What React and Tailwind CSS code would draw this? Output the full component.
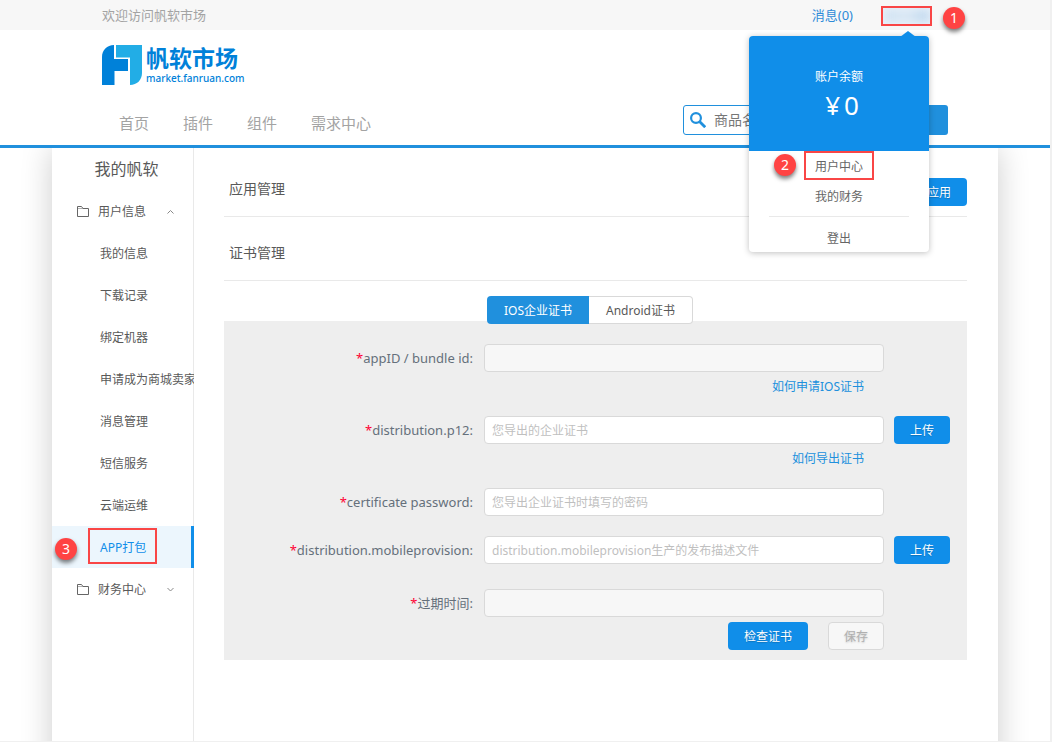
import clsx from 'clsx';

const FONT = 'font-["Noto_Sans","Noto_Sans_CJK_SC",sans-serif]';

const navItems = ['首页', '插件', '组件', '需求中心'];

const userItems = [
  { label: '我的信息' },
  { label: '下载记录' },
  { label: '绑定机器' },
  { label: '申请成为商城卖家' },
  { label: '消息管理' },
  { label: '短信服务' },
  { label: '云端运维' },
  { label: 'APP打包', active: true, step: 3 },
];

const StepBadge = ({ number, className }) => (
  <span
    className={clsx(
      'absolute z-30 flex h-[22px] w-[22px] items-center justify-center rounded-full bg-[#ff4343] text-sm leading-none text-white shadow-[0_3px_4px_rgba(0,0,0,0.5)]',
      className
    )}
  >
    {number}
  </span>
);

const LogoMark = () => (
  <svg className="h-10 w-10" viewBox="0 0 40 40" aria-hidden="true">
    <path d="M0 40V12C0 5 5 0 12 0V14H26V26H12.500V40Z" fill="#0081d9" />
    <path d="M14 0H40V28C40 35 35 40 28 40V12.500H14Z" fill="#22ade6" />
  </svg>
);

const SearchIcon = () => (
  <svg className="h-4 w-4 shrink-0" viewBox="0 0 16 16" fill="none" stroke="#2090dd" aria-hidden="true">
    <circle cx="6" cy="6" r="4.900" strokeWidth="2.200" />
    <path d="M9.500 9.500 15.200 15.200" strokeWidth="2.800" />
  </svg>
);

const FolderIcon = () => (
  <svg className="h-3 w-3 shrink-0" viewBox="0 0 12 12" fill="none" stroke="#666" aria-hidden="true">
    <path d="M.5 10.500V.5H4.500L6 2.500H11.500V10.500Z" />
    <path d="M.5 2.500H6" strokeOpacity="0.5" />
  </svg>
);

const Chevron = ({ open }) => (
  <svg className="h-2 w-2 shrink-0" viewBox="0 0 8 8" fill="none" stroke="#888" aria-hidden="true">
    <path d={open ? 'M1.500 5.500 4.500 2.500 7.500 5.500' : 'M1.500 2 4.500 5 7.500 2'} />
  </svg>
);

const UserMenu = () => (
  <div className="absolute top-[30px] right-[3px] z-20 w-[180px] rounded bg-white text-center text-xs text-[#666] shadow-[0_1px_6px_rgba(0,0,0,0.25)]">
    <span className="absolute -top-[5px] right-[13px] border-x-8 border-b-[6px] border-x-transparent border-b-[#108ee9]" />
    <div className="flex h-[115px] flex-col items-center justify-center rounded-t bg-[#108ee9] pt-0.5 text-white">
      <span className="leading-5">账户余额</span>
      <span className="flex gap-1 pl-1.5 text-[26px] leading-9">
        <span>¥</span>
        <span>0</span>
      </span>
    </div>
    <div className="relative">
      <StepBadge number={2} className="top-[3px] left-[25px]" />
      <a href="#center" className="mx-auto flex h-[29px] w-[70px] items-center justify-center border-2 border-[#f94646] pt-0.5">
        用户中心
      </a>
    </div>
    <a href="#finance" className="flex h-8 items-center justify-center pt-0.5">我的财务</a>
    <div className="mx-5 mt-1 border-t border-[#e9e9e9]" />
    <a href="#logout" className="flex h-[35px] items-center justify-center pt-2">登出</a>
  </div>
);

const TopBar = () => (
  <div className="flex h-[30px] items-center bg-[#f7f7f7] px-[102px] pt-0.5 text-[13px] text-[#a3a3a3]">
    <span>欢迎访问帆软市场</span>
    <a href="#message" className="mr-7 ml-auto text-[#2e8bd8]">消息(0)</a>
    <div className="relative mr-4">
      <button
        type="button"
        aria-label="用户"
        className="block h-5 w-[51px] overflow-hidden border-2 border-[#f94646] bg-[#e9f1f9] p-0.5"
      >
        <span className="block h-3 w-11 bg-linear-to-r from-[#cfe2f3] via-[#d9e7f4] to-[#bcd6ee] blur-xs" />
      </button>
      <StepBadge number={1} className="top-[1px] left-[62px]" />
      <UserMenu />
    </div>
  </div>
);

const Header = () => (
  <header className="relative z-10">
    <TopBar />
    <div className="border-b-[3px] border-[#2090dd] bg-white px-[102px] pt-[15px] pb-[10px]">
      <a href="#home" className="flex w-fit gap-1 text-[#0081d9]">
        <LogoMark />
        <span className="flex flex-col">
          <span className="text-[23px] leading-[26px] font-bold">帆软市场</span>
          <span className="text-[10px] leading-[14px] font-medium">market.fanruan.com</span>
        </span>
      </a>
      <div className="mt-5 flex items-center justify-between">
        <nav className="mt-1.5 flex gap-[34px] pl-[17px] text-[15px] text-[#a3a3a3]">
          {navItems.map((item) => (
            <a key={item} href="#nav">{item}</a>
          ))}
        </nav>
        <form className="flex h-[30px] w-[265px]">
          <label className="flex min-w-0 flex-1 items-center gap-2 rounded-l-[3px] border border-[#2090dd] pl-1.5">
            <SearchIcon />
            <input
              type="text"
              aria-label="搜索商品"
              placeholder="商品名称"
              className="w-full min-w-0 text-sm outline-none placeholder:text-[#777]"
            />
          </label>
          <button type="submit" aria-label="搜索" className="w-[88px] rounded-r-[3px] bg-[#2090dd]" />
        </form>
      </div>
    </div>
  </header>
);

const GroupRow = ({ label, open }) => (
  <button type="button" aria-expanded={open} className="flex h-[42px] w-full items-center pt-0.5 pl-[25px]">
    <FolderIcon />
    <span className="ml-[9px] w-[68px] text-left">{label}</span>
    <Chevron open={open} />
  </button>
);

const Sidebar = () => (
  <aside className="w-[142px] shrink-0 border-r border-[#e9e9e9] text-xs text-[#595959]">
    <div className="flex h-[42px] items-center justify-center pl-2 text-base">我的帆软</div>
    <div className="-mr-px overflow-hidden">
      <GroupRow label="用户信息" open />
      <ul>
        {userItems.map((item) => (
          <li
            key={item.label}
            className={clsx(
              'relative flex h-[42px] pt-0.5 whitespace-nowrap',
              item.active
                ? 'items-start border-r-[3px] border-[#108ee9] bg-[#ecf6fd] text-[#108ee9]'
                : 'items-center'
            )}
          >
            {item.step && <StepBadge number={item.step} className="top-3 left-[3px]" />}
            {item.active ? (
              <a href="#item" className="ml-9 flex h-9 w-[69px] items-center border-2 border-[#f94646] pt-1 pl-[10px]">
                {item.label}
              </a>
            ) : (
              <a href="#item" className="ml-12">{item.label}</a>
            )}
          </li>
        ))}
      </ul>
      <GroupRow label="财务中心" open={false} />
    </div>
  </aside>
);

const SectionTitle = ({ title, children }) => (
  <div className="flex h-16 items-center border-b border-[#e9e9e9] pt-2 pl-[5px] text-[#595959]">
    <h2 className="text-sm">{title}</h2>
    {children}
  </div>
);

const PrimaryButton = ({ children, className }) => (
  <button
    type="button"
    className={clsx(
      'h-7 rounded bg-[#108ee9] pt-0.5 text-xs text-white [text-shadow:0_1px_1px_rgba(0,0,0,0.2)]',
      className
    )}
  >
    {children}
  </button>
);

const Field = ({ id, label, placeholder, disabled, link, upload, className }) => (
  <div className={clsx('grid grid-cols-[250px_minmax(0,1fr)_56px] items-center gap-x-[10px]', className)}>
    <label htmlFor={id} className="pt-0.5 pr-px text-right text-[13px] text-[#65707b]">
      <span className="text-[#ff0033]">*</span>
      {label}:
    </label>
    <input
      id={id}
      type="text"
      disabled={disabled}
      placeholder={placeholder}
      className="h-7 rounded border border-[#d9d9d9] bg-white px-[7px] text-xs outline-none placeholder:text-[#bfbfbf] disabled:bg-[#f7f7f7]"
    />
    {upload && <PrimaryButton>上传</PrimaryButton>}
    {link && (
      <a href="#help" className="col-start-2 h-7 justify-self-end pr-5 text-xs leading-[30px] text-[#2090dd]">
        {link}
      </a>
    )}
  </div>
);

const CertificateForm = () => (
  <form className="bg-[#eee] pt-[23px] pr-[17px] pb-[10px]">
    <Field id="appId" label="appID / bundle id" disabled link="如何申请IOS证书" className="mb-4" />
    <Field
      id="p12"
      label="distribution.p12"
      placeholder="您导出的企业证书"
      link="如何导出证书"
      upload
      className="mb-4"
    />
    <Field id="password" label="certificate password" placeholder="您导出企业证书时填写的密码" className="mb-5" />
    <Field
      id="provision"
      label="distribution.mobileprovision"
      placeholder="distribution.mobileprovision生产的发布描述文件"
      upload
      className="mb-[25px]"
    />
    <Field id="expire" label="过期时间" disabled className="mb-[5px]" />
    <div className="mr-[66px] flex justify-end gap-5">
      <PrimaryButton className="w-20">检查证书</PrimaryButton>
      <button
        type="button"
        disabled
        className="h-7 w-14 rounded border border-[#d9d9d9] bg-[#f7f7f7] pt-0.5 text-xs text-[#b0b0b0] [text-shadow:0_1px_2px_rgba(0,0,0,0.2)]"
      >
        保存
      </button>
    </div>
  </form>
);

const App = () => (
  <div className={clsx('flex min-h-screen flex-col border-r-2 border-b border-[#f0f0f0] bg-white', FONT)}>
    <Header />
    <main className="flex flex-1 overflow-hidden px-[52px]">
      <div className="-mb-10 flex flex-1 bg-white pb-10 shadow-[0_0_30px_rgba(0,0,0,0.2)]">
        <Sidebar />
        <div className="min-w-0 flex-1 pt-[5px] pr-[31px] pl-[30px]">
          <SectionTitle title="应用管理">
            <PrimaryButton className="mt-1.5 ml-auto w-20">添加应用</PrimaryButton>
          </SectionTitle>
          <SectionTitle title="证书管理" />
          <div className="relative mt-[15px] -mb-[3px] flex pl-[263px] text-xs">
            <button type="button" className="h-7 w-[102px] rounded-l bg-[#2090dd] pt-0.5 text-white">
              IOS企业证书
            </button>
            <button
              type="button"
              className="h-7 w-[104px] rounded-r border border-l-0 border-[#d9d9d9] bg-white pt-0.5 text-[#595959]"
            >
              Android证书
            </button>
          </div>
          <CertificateForm />
        </div>
      </div>
    </main>
  </div>
);

export default App;
